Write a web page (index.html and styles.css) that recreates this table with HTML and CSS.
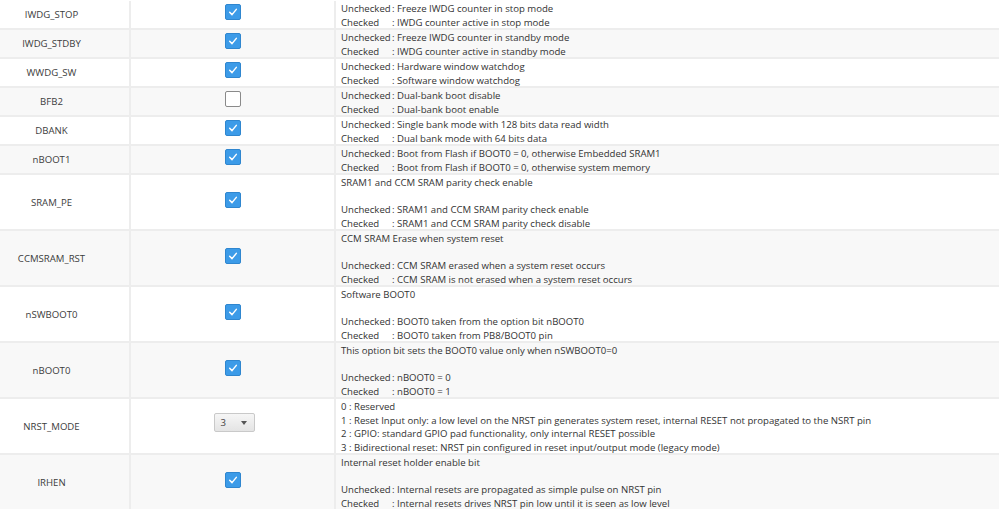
FILE: index.html
```html
<!DOCTYPE html>
<html>
<head>
<meta charset="utf-8">
<link rel="stylesheet" href="styles.css">
</head>
<body>
<div class="tbl">
  <div class="row">
    <div class="name">IWDG_STOP</div>
    <div class="val"><span class="cb on"><svg viewBox="0 0 16 16"><path d="M4.2 8.3 L6.9 11 L11.8 5"/></svg></span></div>
    <div class="desc"><div><span class="k">Unchecked</span>: Freeze IWDG counter in stop mode</div><div><span class="k">Checked</span>: IWDG counter active in stop mode</div></div>
  </div>
  <div class="row alt">
    <div class="name">IWDG_STDBY</div>
    <div class="val"><span class="cb on"><svg viewBox="0 0 16 16"><path d="M4.2 8.3 L6.9 11 L11.8 5"/></svg></span></div>
    <div class="desc"><div><span class="k">Unchecked</span>: Freeze IWDG counter in standby mode</div><div><span class="k">Checked</span>: IWDG counter active in standby mode</div></div>
  </div>
  <div class="row">
    <div class="name">WWDG_SW</div>
    <div class="val"><span class="cb on"><svg viewBox="0 0 16 16"><path d="M4.2 8.3 L6.9 11 L11.8 5"/></svg></span></div>
    <div class="desc"><div><span class="k">Unchecked</span>: Hardware window watchdog</div><div><span class="k">Checked</span>: Software window watchdog</div></div>
  </div>
  <div class="row alt">
    <div class="name">BFB2</div>
    <div class="val"><span class="cb"></span></div>
    <div class="desc"><div><span class="k">Unchecked</span>: Dual-bank boot disable</div><div><span class="k">Checked</span>: Dual-bank boot enable</div></div>
  </div>
  <div class="row">
    <div class="name">DBANK</div>
    <div class="val"><span class="cb on"><svg viewBox="0 0 16 16"><path d="M4.2 8.3 L6.9 11 L11.8 5"/></svg></span></div>
    <div class="desc"><div><span class="k">Unchecked</span>: Single bank mode with 128 bits data read width</div><div><span class="k">Checked</span>: Dual bank mode with 64 bits data</div></div>
  </div>
  <div class="row alt">
    <div class="name">nBOOT1</div>
    <div class="val"><span class="cb on"><svg viewBox="0 0 16 16"><path d="M4.2 8.3 L6.9 11 L11.8 5"/></svg></span></div>
    <div class="desc"><div><span class="k">Unchecked</span>: Boot from Flash if BOOT0 = 0, otherwise Embedded SRAM1</div><div><span class="k">Checked</span>: Boot from Flash if BOOT0 = 0, otherwise system memory</div></div>
  </div>
  <div class="row">
    <div class="name">SRAM_PE</div>
    <div class="val"><span class="cb on"><svg viewBox="0 0 16 16"><path d="M4.2 8.3 L6.9 11 L11.8 5"/></svg></span></div>
    <div class="desc"><div>SRAM1 and CCM SRAM parity check enable</div><div class="blank"></div><div><span class="k">Unchecked</span>: SRAM1 and CCM SRAM parity check enable</div><div><span class="k">Checked</span>: SRAM1 and CCM SRAM parity check disable</div></div>
  </div>
  <div class="row alt">
    <div class="name">CCMSRAM_RST</div>
    <div class="val"><span class="cb on"><svg viewBox="0 0 16 16"><path d="M4.2 8.3 L6.9 11 L11.8 5"/></svg></span></div>
    <div class="desc"><div>CCM SRAM Erase when system reset</div><div class="blank"></div><div><span class="k">Unchecked</span>: CCM SRAM erased when a system reset occurs</div><div><span class="k">Checked</span>: CCM SRAM is not erased when a system reset occurs</div></div>
  </div>
  <div class="row">
    <div class="name">nSWBOOT0</div>
    <div class="val"><span class="cb on"><svg viewBox="0 0 16 16"><path d="M4.2 8.3 L6.9 11 L11.8 5"/></svg></span></div>
    <div class="desc"><div>Software BOOT0</div><div class="blank"></div><div><span class="k">Unchecked</span>: BOOT0 taken from the option bit nBOOT0</div><div><span class="k">Checked</span>: BOOT0 taken from PB8/BOOT0 pin</div></div>
  </div>
  <div class="row alt">
    <div class="name">nBOOT0</div>
    <div class="val"><span class="cb on"><svg viewBox="0 0 16 16"><path d="M4.2 8.3 L6.9 11 L11.8 5"/></svg></span></div>
    <div class="desc"><div>This option bit sets the BOOT0 value only when nSWBOOT0=0</div><div class="blank"></div><div><span class="k">Unchecked</span>: nBOOT0 = 0</div><div><span class="k">Checked</span>: nBOOT0 = 1</div></div>
  </div>
  <div class="row">
    <div class="name">NRST_MODE</div>
    <div class="val"><span class="sel"><span class="sel-v">3</span><span class="arrow"></span></span></div>
    <div class="desc"><div>0 : Reserved</div><div>1 : Reset Input only: a low level on the NRST pin generates system reset, internal RESET not propagated to the NSRT pin</div><div>2 : GPIO: standard GPIO pad functionality, only internal RESET possible</div><div>3 : Bidirectional reset: NRST pin configured in reset input/output mode (legacy mode)</div></div>
  </div>
  <div class="row alt">
    <div class="name">IRHEN</div>
    <div class="val"><span class="cb on"><svg viewBox="0 0 16 16"><path d="M4.2 8.3 L6.9 11 L11.8 5"/></svg></span></div>
    <div class="desc"><div>Internal reset holder enable bit</div><div class="blank"></div><div><span class="k">Unchecked</span>: Internal resets are propagated as simple pulse on NRST pin</div><div><span class="k">Checked</span>: Internal resets drives NRST pin low until it is seen as low level</div></div>
  </div>
</div>
</body>
</html>
```

FILE: styles.css
```css
html, body {
  margin: 0;
  padding: 0;
  background: #ffffff;
}
body {
  font-family: "Open Sans", "Noto Sans", sans-serif;
  font-size: 9.6px;
  color: #333333;
  overflow: hidden;
}
.tbl {
  display: flex;
  flex-direction: column;
  width: 999px;
  padding-top: 1px;
}
.row {
  display: grid;
  grid-template-columns: 131px 205px 1fr;
  border-bottom: 2px solid #ededed;
  background: #ffffff;
}
.row.alt {
  background: #f8f8f8;
}
.name {
  display: flex;
  align-items: center;
  justify-content: center;
  padding-right: 26px;
  border-right: 2px solid #ededed;
  color: #3c3c3c;
}
.val {
  display: flex;
  align-items: center;
  justify-content: center;
  border-right: 2px solid #ededed;
}
.desc {
  padding-left: 5px;
  padding-top: 1px;
  margin-bottom: -1px;
  line-height: 13.5px;
  white-space: nowrap;
}
.blank {
  height: 13.5px;
}
.k {
  display: inline-block;
  width: 51px;
}
.cb {
  width: 14px;
  height: 14px;
  border: 1px solid #8a8a8a;
  border-radius: 2px;
  background: #ffffff;
  display: flex;
  margin-bottom: 5px;
}
.cb.on {
  background: #3c9be8;
  border-color: #2f86cf;
}
.cb svg {
  width: 14px;
  height: 14px;
  fill: none;
  stroke: #ffffff;
  stroke-width: 1.7;
  stroke-linecap: round;
  stroke-linejoin: round;
}
.sel {
  display: flex;
  align-items: center;
  justify-content: space-between;
  box-sizing: border-box;
  width: 41px;
  height: 19px;
  margin-left: 3px;
  margin-bottom: 7px;
  padding: 0 7px 0 6px;
  border: 1px solid #c9c9c9;
  border-radius: 2px;
  background: linear-gradient(#f6f6f6, #e4e4e4);
}
.sel-v {
  color: #444444;
}
.arrow {
  width: 0;
  height: 0;
  border-left: 3.5px solid transparent;
  border-right: 3.5px solid transparent;
  border-top: 4px solid #555555;
}
```
